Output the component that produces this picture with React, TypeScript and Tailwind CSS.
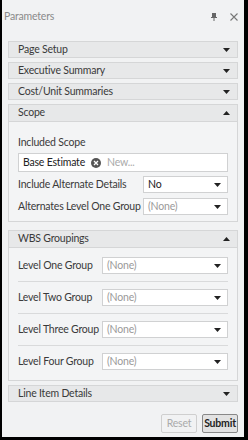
const FONT = { fontFamily: '"Lato", "Open Sans", sans-serif' };
const TXT = "text-[10.5px] tracking-[-0.2px]";

function Caret({ up = false }: { up?: boolean }) {
  return (
    <svg width="7" height="4" viewBox="0 0 7 4" className="shrink-0">
      {up ? <path d="M0 4 L3.5 0 L7 4 Z" fill="#222" /> : <path d="M0 0 L7 0 L3.5 4 Z" fill="#222" />}
    </svg>
  );
}

function Header({ title, up = false, inBox = false }: { title: string; up?: boolean; inBox?: boolean }) {
  return (
    <div
      className={`flex h-[17px] shrink-0 items-center justify-between bg-[#e7e8e9] pl-[9px] pr-[7px] ${TXT} text-[#3a3a3a] ${
        inBox ? "border-b border-[#d5d6d7]" : "border border-[#d5d6d7]"
      }`}
    >
      <span className="whitespace-nowrap">{title}</span>
      <Caret up={up} />
    </div>
  );
}

function Select({ value, muted = false, width }: { value: string; muted?: boolean; width: string }) {
  return (
    <div
      className={`flex h-[17px] shrink-0 ${width} items-center justify-between border border-[#d0d1d2] bg-white pl-[4px] pr-[6px] ${TXT} ${
        muted ? "text-[#9a9a9a]" : "text-[#222]"
      }`}
    >
      <span className="whitespace-nowrap">{value}</span>
      <Caret />
    </div>
  );
}

function WbsRow({ label, last = false }: { label: string; last?: boolean }) {
  return (
    <div className={`flex items-center justify-between pb-[7px] pt-[7px] ${last ? "" : "border-b border-[#d9dadb]"}`}>
      <span className={`whitespace-nowrap ${TXT} text-[#3a3a3a]`}>{label}</span>
      <Select value="(None)" muted width="w-[126px]" />
    </div>
  );
}

export default function App() {
  return (
    <div
      className="flex h-[440px] w-[248px] flex-col overflow-hidden border-b-[3px] border-l-2 border-r-4 border-black bg-[#f1f2f3]"
      style={FONT}
    >
      <div className="flex h-[34px] shrink-0 items-center justify-between pl-[2px] pr-[6px]">
        <span className={`${TXT} text-[#8a8a8a]`}>Parameters</span>
        <div className="flex items-center gap-[13px]">
          <svg width="6" height="8" viewBox="0 0 6 8">
            <rect x="1" y="0" width="4" height="4" fill="#666" />
            <rect x="0" y="4" width="6" height="1" fill="#666" />
            <rect x="2.5" y="5" width="1" height="3" fill="#666" />
          </svg>
          <svg width="8" height="8" viewBox="0 0 8 8">
            <path d="M0.5 0.5 L7.5 7.5 M7.5 0.5 L0.5 7.5" stroke="#777" strokeWidth="1.1" />
          </svg>
        </div>
      </div>

      <div className="flex shrink-0 flex-col gap-[4px] px-[6px] pt-[7px]">
        <Header title="Page Setup" />
        <Header title="Executive Summary" />
        <Header title="Cost/Unit Summaries" />

        <div className="border border-[#d5d6d7] bg-[#f3f4f5]">
          <Header title="Scope" up inBox />
          <div className="flex flex-col px-[9px] pb-[6px] pt-[13px]">
            <span className={`h-[14px] leading-[14px] ${TXT} text-[#3a3a3a]`}>Included Scope</span>
            <div className={`mt-[4px] flex h-[19px] items-center gap-[6px] border border-[#d0d1d2] bg-white pl-[4px] ${TXT}`}>
              <span className="text-[#222]">Base Estimate</span>
              <svg width="10" height="10" viewBox="0 0 10 10">
                <circle cx="5" cy="5" r="5" fill="#555" />
                <path d="M3 3 L7 7 M7 3 L3 7" stroke="#fff" strokeWidth="1.3" />
              </svg>
              <span className="text-[#aaa]">New...</span>
            </div>
            <div className="mt-[4px] flex items-center justify-between">
              <span className={`whitespace-nowrap ${TXT} text-[#3a3a3a]`}>Include Alternate Details</span>
              <Select value="No" width="w-[85px]" />
            </div>
            <div className="mt-[5px] flex items-center justify-between">
              <span className={`whitespace-nowrap ${TXT} text-[#3a3a3a]`}>Alternates Level One Group</span>
              <Select value="(None)" muted width="w-[85px]" />
            </div>
          </div>
        </div>

        <div className="mt-[4px] border border-[#d5d6d7] bg-[#f3f4f5]">
          <Header title="WBS Groupings" up inBox />
          <div className="flex flex-col px-[9px] pb-[3px] pt-[2px]">
            <WbsRow label="Level One Group" />
            <WbsRow label="Level Two Group" />
            <WbsRow label="Level Three Group" />
            <WbsRow label="Level Four Group" last />
          </div>
        </div>

        <Header title="Line Item Details" />
      </div>

      <div className="mt-[12px] flex shrink-0 justify-end gap-[5px] pr-[6px]">
        <button className={`h-[19px] w-[36px] rounded-[2px] border border-[#cfcfcf] ${TXT} text-[#aaa]`}>Reset</button>
        <button className={`h-[19px] w-[36px] rounded-[2px] border border-[#888] bg-[#e2e2e2] ${TXT} font-bold text-[#222]`}>
          Submit
        </button>
      </div>
    </div>
  );
}
